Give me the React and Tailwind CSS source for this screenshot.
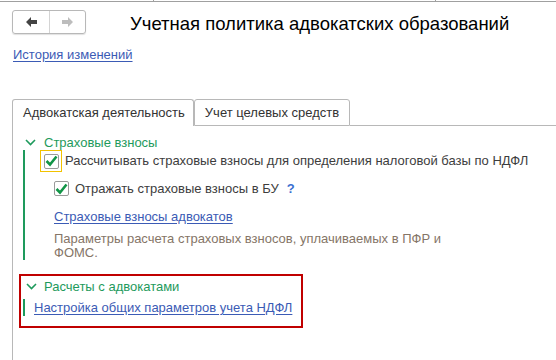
import React from 'react'

const font = { fontFamily: '"Liberation Sans", Arial, sans-serif' }

function Arrow({ dir = 'left', color }) {
  const d = dir === 'left' ? 'M1 6 L6 1 L6 4 L12 4 L12 8 L6 8 L6 11 Z' : 'M12 6 L7 1 L7 4 L1 4 L1 8 L7 8 L7 11 Z'
  return (
    <svg width="13" height="12" viewBox="0 0 13 12">
      <path d={d} fill={color} />
    </svg>
  )
}

function Chevron() {
  return (
    <svg width="11" height="7" viewBox="0 0 11 7" className="shrink-0">
      <path d="M1 1 L5.5 5.5 L10 1" fill="none" stroke="#1e9a5c" strokeWidth="1.6" />
    </svg>
  )
}

function Check() {
  return (
    <div className="flex h-[15px] w-[15px] shrink-0 items-center justify-center rounded-[2px] border border-[#9a9a9a] bg-white">
      <svg width="13" height="12" viewBox="0 0 13 12">
        <path d="M1.5 6 L5 9.5 L11.5 1.5" fill="none" stroke="#129547" strokeWidth="2.6" />
      </svg>
    </div>
  )
}

export default function App() {
  return (
    <div className="h-[360px] w-[556px] overflow-hidden bg-white text-[13px]" style={font}>
      <div className="flex h-px">
        <div className="ml-[153px] w-px bg-[#a0a0a0]" />
        <div className="ml-[281px] w-px bg-[#a0a0a0]" />
      </div>
      <div className="h-px bg-[#a0a0a0]" />

      <div className="mt-[8px] flex items-center">
        <div className="ml-[12px] flex h-[24px] w-[74px] rounded-[3px] border border-[#b8b8b8] shadow-[0_1px_1px_rgba(0,0,0,0.12)]">
          <div className="flex w-[37px] items-center justify-center border-r border-[#d4d4d4]">
            <Arrow dir="left" color="#444" />
          </div>
          <div className="flex flex-1 items-center justify-center">
            <Arrow dir="right" color="#bdbdbd" />
          </div>
        </div>
        <div className="ml-[44px] pt-[4px] text-[18.5px] leading-none text-black">Учетная политика адвокатских образований</div>
      </div>

      <div className="ml-[13px] mt-[13px] leading-[15px]">
        <span className="text-[#3b5bb5] underline underline-offset-2">История изменений</span>
      </div>

      <div className="ml-[12px] mt-[37px]">
        <div className="flex items-end">
          <div className="flex h-[27px] w-[182px] items-center rounded-t-[3px] border border-b-0 border-[#b8b8b8] pl-[10px] text-[#333]">
            Адвокатская деятельность
          </div>
          <div className="flex h-[27px] w-[156px] items-center justify-center rounded-t-[3px] border border-[#b8b8b8] text-[#333]">
            Учет целевых средств
          </div>
          <div className="h-[27px] flex-1 border-b border-[#b8b8b8]" />
        </div>

        <div className="h-[240px] border-l border-[#b8b8b8] pl-[10px] pt-[9px]">
          <div className="flex items-center gap-[8px] pl-[2px] leading-[15px] text-[#1e9a5c]">
            <Chevron />
            <span>Страховые взносы</span>
          </div>

          <div className="border-l-2 border-[#1e9a5c] pl-[15px]">
            <div className="flex items-center gap-[3px]">
              <div className="flex h-[22px] w-[22px] items-center justify-center border border-[#f2c200]">
                <Check />
              </div>
              <span className="text-[#3d3d3d]">Рассчитывать страховые взносы для определения налоговой базы по НДФЛ</span>
            </div>
            <div className="ml-[14px] mt-[7px] flex items-center gap-[6px]">
              <Check />
              <span className="text-[#3d3d3d]">Отражать страховые взносы в БУ</span>
              <span className="ml-[2px] font-bold text-[#3b6fd0]">?</span>
            </div>
            <div className="ml-[14px] mt-[8px] text-[#3b5bb5] underline underline-offset-2">Страховые взносы адвокатов</div>
            <div className="ml-[14px] mt-[6px] w-[400px] leading-[14px] text-[#857567]">
              Параметры расчета страховых взносов, уплачиваемых в ПФР и ФОМС.
            </div>
          </div>

          <div className="ml-[-4px] mt-[14px] w-[284px] border-2 border-[#c00000] pb-[10px] pt-[3px]">
            <div className="flex items-center gap-[7px] pl-[5px] leading-[15px] text-[#1e9a5c]">
              <Chevron />
              <span>Расчеты с адвокатами</span>
            </div>
            <div className="ml-[2px] mt-[5px] border-l-2 border-[#1e9a5c] pl-[9px] leading-[17px]">
              <span className="text-[#3b5bb5] underline underline-offset-2">Настройка общих параметров учета НДФЛ</span>
            </div>
          </div>
        </div>
      </div>
    </div>
  )
}
